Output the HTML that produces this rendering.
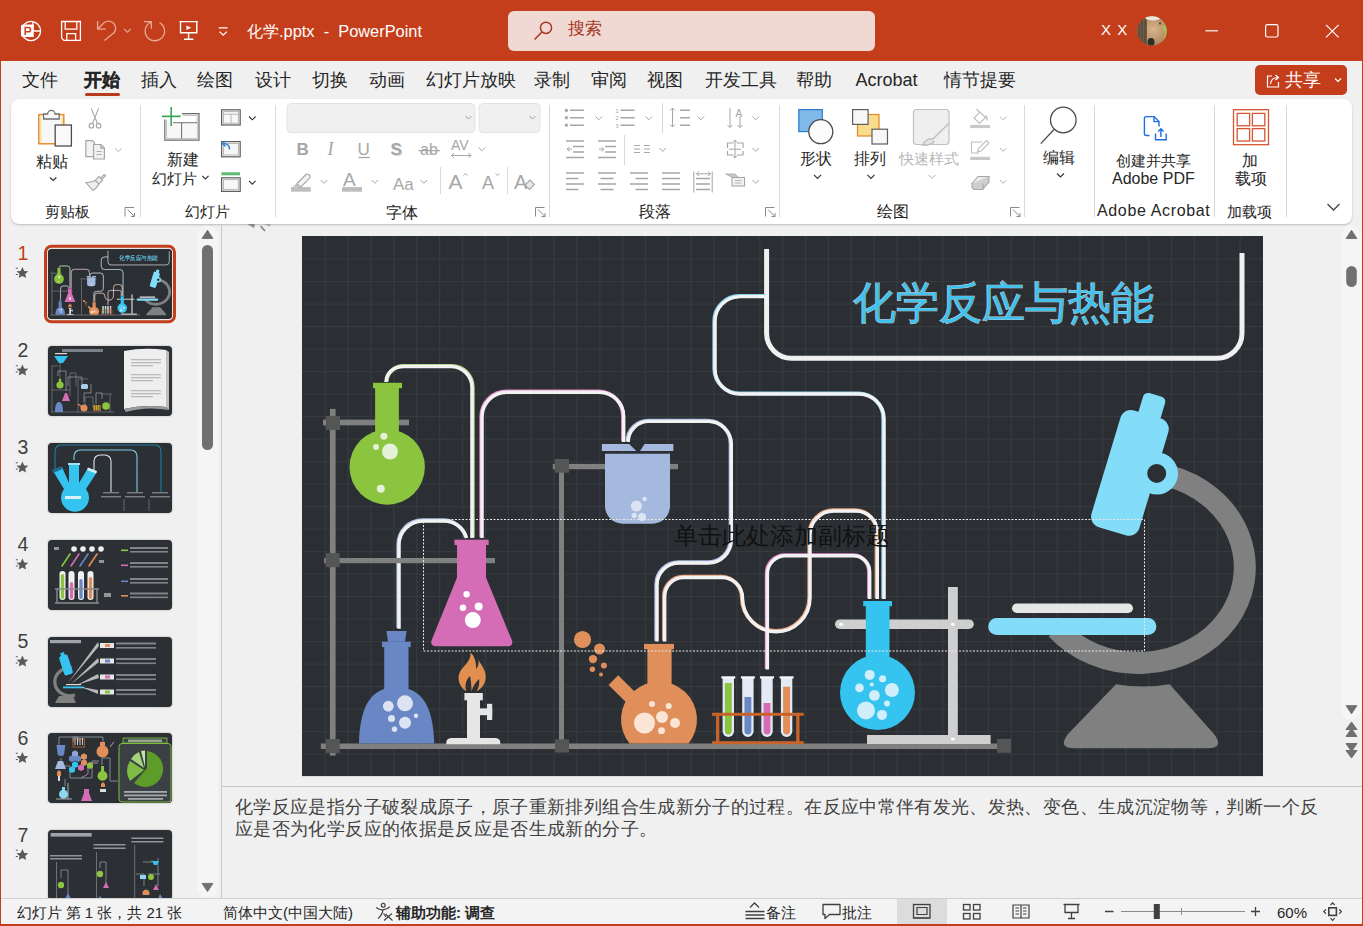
<!DOCTYPE html>
<html><head><meta charset="utf-8">
<style>
*{box-sizing:border-box;margin:0;padding:0}
html,body{width:1363px;height:926px;overflow:hidden;background:#F0F0F0}
body{font-family:"Liberation Sans",sans-serif;color:#262626;position:relative}
.a{position:absolute}
.t{position:absolute;white-space:nowrap;line-height:1}
svg{position:absolute;overflow:visible}
</style></head><body>
<!-- TITLEBAR -->
<div class="a" style="left:0;top:0;width:1363px;height:61px;background:#C43E1C"></div>
<svg style="left:0;top:0" width="1363" height="61" viewBox="0 0 1363 61">
 <g fill="none" stroke="#fff" stroke-width="1.3">
  <circle cx="31" cy="31" r="9.6"/>
  <path d="M33 31H40.6M33 21.4V31"/>
 </g>
 <path d="M21 25.5L23 24.6H33.7V37H23L21 36Z" fill="#fff"/>
 <path d="M25.2 35V27.6H28.4A2.1 2.1 0 0 1 28.4 31.8H25.2" fill="none" stroke="#C43E1C" stroke-width="1.5"/>
 <g fill="none" stroke="#fff" stroke-width="1.3">
  <path d="M61.6 21.5H80.4V40.3H63.8L61.6 38.1Z"/>
  <path d="M65.2 21.5V29.2H76.8V21.5"/>
  <path d="M66.8 40.3V33.6H75.6V40.3"/>
 </g>
 <g fill="none" stroke="#E9A897" stroke-width="1.3">
  <path d="M97.6 21V29.2H105.8M97.8 29L104 22.8A7.1 7.1 0 0 1 114 32.8L104.4 40.6"/>
  <path d="M124 28.8L127.4 32.2L130.8 28.8" stroke-width="1.1"/>
  <path d="M151.4 22A9.7 9.7 0 1 0 159.6 22.6M144 21.6H151.4V28.8"/>
 </g>
 <g fill="none" stroke="#fff" stroke-width="1.4">
  <path d="M179.5 21.6H197.8M180.5 21.6V32.7H196.8V21.6M188.6 32.7V38.8M184 39.2H193.4"/>
 </g>
 <path d="M186.4 25.5L191.3 27.7L186.4 30Z" fill="#fff"/>
 <g fill="none" stroke="#fff" stroke-width="1.3">
  <path d="M218.8 27.8H227.6M219.6 31.6L223.2 35.2L226.8 31.6"/>
 </g>
 <!-- search box -->
 <rect x="508" y="11" width="367" height="40" rx="6" fill="#F1D9D3"/>
 <g fill="none" stroke="#A5361B" stroke-width="1.5">
  <circle cx="546" cy="27.8" r="5.6"/>
  <path d="M541.9 31.9L534.6 39.4"/>
 </g>
 <!-- window controls -->
 <g fill="none" stroke="#fff" stroke-width="1.2">
  <path d="M1205.5 30.8H1218"/>
  <rect x="1265.6" y="24.6" width="12.4" height="12.4" rx="1.8"/>
  <path d="M1326 24.8L1338.6 37.4M1338.6 24.8L1326 37.4"/>
 </g>
 <!-- avatar -->
 <defs><clipPath id="avc"><circle cx="1152" cy="30.9" r="14.7"/></clipPath>
 <radialGradient id="av" cx="0.55" cy="0.45" r="0.55"><stop offset="0" stop-color="#D8B58C"/><stop offset="0.8" stop-color="#B68E64"/><stop offset="1" stop-color="#9E7B58"/></radialGradient></defs>
 <g clip-path="url(#avc)">
  <rect x="1137" y="16" width="30" height="30" fill="url(#av)"/>
  <rect x="1137" y="16" width="10" height="30" fill="#6E5E48"/>
  <path d="M1139 18V46M1142 17V46M1145 18V46" stroke="#4A3E30" stroke-width="0.9"/>
  <path d="M1162 26Q1168 34 1162 42L1168 44V24Z" fill="#A7C159"/>
  <ellipse cx="1153" cy="17.5" rx="8" ry="3" fill="#EDE6D8"/>
  <ellipse cx="1151" cy="42" rx="3.5" ry="4" fill="#2E2E28"/>
  <circle cx="1160" cy="23.5" r="1" fill="#3A3026"/>
 </g>
</svg>
<div class="t" style="left:247px;top:23px;font-size:16.4px;color:#fff">化学.pptx&nbsp; - &nbsp;PowerPoint</div>
<div class="t" style="left:568px;top:20px;font-size:17px;color:#A5361B">搜索</div>
<div class="t" style="left:1101px;top:22px;font-size:15px;color:#fff;letter-spacing:1px">X X</div>
<!-- TABS -->
<!-- TABS -->
<div class="t" style="left:22.0px;top:71px;font-size:18px;">文件</div>
<div class="t" style="left:84.0px;top:71px;font-size:18px;font-weight:bold;-webkit-text-stroke:0.35px #262626">开始</div>
<div class="t" style="left:140.7px;top:71px;font-size:18px;">插入</div>
<div class="t" style="left:197.4px;top:71px;font-size:18px;">绘图</div>
<div class="t" style="left:254.8px;top:71px;font-size:18px;">设计</div>
<div class="t" style="left:312.0px;top:71px;font-size:18px;">切换</div>
<div class="t" style="left:369.0px;top:71px;font-size:18px;">动画</div>
<div class="t" style="left:426.0px;top:71px;font-size:18px;">幻灯片放映</div>
<div class="t" style="left:534.0px;top:71px;font-size:18px;">录制</div>
<div class="t" style="left:591.0px;top:71px;font-size:18px;">审阅</div>
<div class="t" style="left:647.0px;top:71px;font-size:18px;">视图</div>
<div class="t" style="left:704.7px;top:71px;font-size:18px;">开发工具</div>
<div class="t" style="left:795.5px;top:71px;font-size:18px;">帮助</div>
<div class="t" style="left:855.5px;top:71px;font-size:18px;">Acrobat</div>
<div class="t" style="left:944.0px;top:71px;font-size:18px;">情节提要</div>
<div class="a" style="left:85px;top:93px;width:35px;height:3px;border-radius:2px;background:#B83B1D"></div>
<div class="a" style="left:1255px;top:65px;width:92px;height:30px;border-radius:5px;background:#C43E1C"></div>
<svg style="left:1255px;top:65px" width="92" height="30" viewBox="0 0 92 30">
 <g fill="none" stroke="#fff" stroke-width="1.2">
  <path d="M17 11H12.5V22H23.5V17"/>
  <path d="M15.5 19C16 14.5 19 12.5 23 12.5M20.5 10L23.5 12.5L20.5 15"/>
  <path d="M80 13.5L83 16.5L86 13.5"/>
 </g>
</svg>
<div class="t" style="left:1285px;top:71px;font-size:18px;color:#fff">共享</div>
<!-- RIBBON -->
<div class="a" style="left:11px;top:99px;width:1341px;height:125px;background:#fff;border-radius:8px;box-shadow:0 1px 2px rgba(0,0,0,0.22)"></div>
<svg style="left:0;top:0" width="1363" height="230" viewBox="0 0 1363 230">
 <!-- separators -->
 <g stroke="#D9D9D9" stroke-width="1">
  <path d="M140.5 105V217M275.5 105V217M549.5 105V217M779.5 105V217M1024.5 105V217M1094.5 105V217M1214.5 105V217M1286.5 105V217"/>
  <path d="M440.5 167V194M507.5 167V194M662.5 103V133M624.5 135V165"/>
 </g>
 <!-- launchers -->
 <g fill="none" stroke="#8A8A8A" stroke-width="1">
  <path d="M125 216.5V207.5H134M127.5 209.5L134.5 216.5M131 216.5H134.5V213"/>
  <path d="M535.5 216.5V207.5H544.5M538 209.5L545 216.5M541.5 216.5H545V213"/>
  <path d="M765.5 216.5V207.5H774.5M768 209.5L775 216.5M771.5 216.5H775V213"/>
  <path d="M1010.5 216.5V207.5H1019.5M1013 209.5L1020 216.5M1016.5 216.5H1020V213"/>
 </g>
 <!-- paste -->
 <rect x="38.8" y="114.6" width="25" height="29.2" fill="#F7F7F7" stroke="#E8871E" stroke-width="1.4"/>
 <path d="M40.8 142V116.5M62 116.5V124" stroke="#F9DC8C" stroke-width="1.2"/>
 <path d="M43.6 119V114H47.6A3.7 3.7 0 0 1 55 114H59.2V119Z" fill="#F7F7F7" stroke="#707070" stroke-width="1.3"/>
 <rect x="55.2" y="125" width="16.2" height="21" fill="#FAFAFA" stroke="#4D4D4D" stroke-width="1.3"/>
 <path d="M50 177.5L53.2 180.5L56.4 177.5" fill="none" stroke="#333" stroke-width="1.2"/>
 <!-- cut -->
 <g fill="none" stroke="#A6A6A6" stroke-width="1.1">
  <path d="M91.3 108.4L97.5 123.8M98.6 108.4L92.4 123.8"/>
  <circle cx="91.4" cy="125.7" r="2.3"/><circle cx="98.6" cy="125.7" r="2.3"/>
 </g>
 <!-- copy -->
 <g fill="#F2F2F2" stroke="#A6A6A6" stroke-width="1.2">
  <path d="M85.8 156.6V140.6H92.5L94.5 142.6V156.6Z"/>
  <path d="M93.6 159V144.5H100.8L104.4 148.1V159Z"/>
  <path d="M100.8 144.5V148.1H104.4" fill="none"/>
  <path d="M96.5 151.5H101.5M96.5 154.5H101.5" fill="none" stroke-width="0.9"/>
 </g>
 <path d="M115.2 148.5L118.4 151.7L121.6 148.5" fill="none" stroke="#B0B0B0" stroke-width="1"/>
 <!-- format painter -->
 <g fill="#EDEDED" stroke="#A6A6A6" stroke-width="1.1">
  <path d="M104.2 174.5L105.5 175.8L100.5 180.8L99.2 179.5Z"/>
  <path d="M94.8 180.8L99 176.6L102.6 180.2L98.4 184.4Z"/>
  <path d="M86 182.5C90 182.5 93 181.5 95.5 180.5L99 184C97.5 187 95 189 93 190.5Z"/>
 </g>
 <!-- new slide -->
 <g fill="none" stroke="#6B6B6B" stroke-width="1.2">
  <path d="M182 113.6H199V140.2H164.8V119.5"/>
  <path d="M183 115.4H197.2V138.4H166.6V119.5" stroke="#B5B5B5" stroke-width="0.9"/>
  <path d="M173 122.8H197M181.7 122.8V138.4"/>
 </g>
 <rect x="167" y="123.4" width="14" height="14.4" fill="#F7F7F7"/><rect x="182.4" y="123.4" width="14.2" height="14.4" fill="#F7F7F7"/>
 <path d="M162 116.4H180.6M171.2 107V126" stroke="#3AA757" stroke-width="1.6"/>
 <path d="M202.2 175.8L205.4 179L208.6 175.8" fill="none" stroke="#333" stroke-width="1.1"/>
 <!-- layout / reset / section -->
 <g fill="#F7F7F7" stroke="#5E5E5E" stroke-width="1.2">
  <rect x="221.6" y="109.8" width="18.6" height="15.2"/>
  <rect x="221.6" y="141.6" width="18.6" height="15.2"/>
  <rect x="221.6" y="177.8" width="18.6" height="13.6"/>
 </g>
 <g fill="none" stroke="#B0B0B0" stroke-width="0.9">
  <rect x="223.4" y="111.6" width="15" height="11.6"/><path d="M223.4 114.2H238.4M231 114.2V123.2"/>
  <rect x="223.4" y="143.4" width="15" height="11.6"/>
  <rect x="223.4" y="179.6" width="15" height="10"/>
 </g>
 <path d="M221.4 173.8H240" stroke="#5DB870" stroke-width="3"/>
 <path d="M229.5 149.5C229.5 145.5 227 143.5 223 143.5M225.5 141L222.5 143.5L225.5 146.5" fill="none" stroke="#2B88D8" stroke-width="1.4"/>
 <path d="M249 116.5L252.3 119.8L255.6 116.5M249 180.8L252.3 184.1L255.6 180.8" fill="none" stroke="#333" stroke-width="1.1"/>
 <!-- font boxes -->
 <rect x="287" y="103.5" width="188" height="29" rx="4" fill="#F0F0F0" stroke="#E3E3E3"/>
 <rect x="479" y="103.5" width="61" height="29" rx="4" fill="#F0F0F0" stroke="#E3E3E3"/>
 <path d="M465.5 116L468.5 119L471.5 116M529.5 116L532.5 119L535.5 116" fill="none" stroke="#9A9A9A" stroke-width="1"/>
 <g fill="none" stroke="#A6A6A6" stroke-width="1">
  <path d="M478.5 147.5L481.8 150.8L485.1 147.5"/>
  <path d="M320.6 180L323.9 183.3L327.2 180M371.6 180L374.9 183.3L378.2 180M420.6 180L423.9 183.3L427.2 180"/>
  <path d="M595.5 116.5L598.8 119.8L602.1 116.5M645.5 116.5L648.8 119.8L652.1 116.5M697.5 116.5L700.8 119.8L704.1 116.5M752.5 116.5L755.8 119.8L759.1 116.5"/>
  <path d="M659.5 148L662.8 151.3L666.1 148M752.5 148L755.8 151.3L759.1 148M752.5 180L755.8 183.3L759.1 180"/>
 </g>
 <!-- B I U S -->
 <g fill="#A6A6A6">
  <text x="296.5" y="155.3" font-size="17" font-weight="bold" font-family="Liberation Sans">B</text>
  <text x="327.5" y="155.3" font-size="18" font-style="italic" font-family="Liberation Serif">I</text>
  <text x="357.5" y="155.3" font-size="17" font-family="Liberation Sans">U</text>
  <text x="391.5" y="156" font-size="17" font-weight="bold" font-family="Liberation Sans" fill="#D8D8D8">S</text>
  <text x="390.5" y="155.3" font-size="17" font-weight="bold" font-family="Liberation Sans">S</text>
 </g>
 <path d="M358.5 157.5H370" stroke="#A6A6A6" stroke-width="1.3"/>
 <text x="420" y="155" font-size="16" fill="#A6A6A6" font-family="Liberation Sans">ab</text>
 <path d="M418.5 150.6H440" stroke="#A6A6A6" stroke-width="1.2"/>
 <text x="451" y="150" font-size="14" fill="#A6A6A6" font-family="Liberation Sans">AV</text>
 <path d="M451.5 155.5H471M454 153L451.5 155.5L454 158M468.5 153L471 155.5L468.5 158" fill="none" stroke="#A6A6A6" stroke-width="1"/>
 <!-- row3 font -->
 <path d="M291 189.4H310.8" stroke="#BDBDBD" stroke-width="4.6"/>
 <path d="M297 183.5L306 174.5A1.8 1.8 0 0 1 308.6 174.5L309.6 175.5A1.8 1.8 0 0 1 309.6 178.1L300.6 187.1Z" fill="#F4F4F4" stroke="#A6A6A6" stroke-width="1.1"/>
 <path d="M297 183.5L292.5 186.5L300.6 187.1Z" fill="#BDBDBD"/>
 <path d="M342 189.4H362" stroke="#BDBDBD" stroke-width="4.6"/>
 <text x="343" y="185.5" font-size="19" fill="#A6A6A6" font-family="Liberation Sans">A</text>
 <text x="393" y="189.5" font-size="17" fill="#A6A6A6" font-family="Liberation Sans">Aa</text>
 <text x="448.5" y="189" font-size="21" fill="#A6A6A6" font-family="Liberation Sans">A</text>
 <path d="M463.5 175.5L465.5 173.5L467.5 175.5" fill="none" stroke="#A6A6A6" stroke-width="1"/>
 <text x="482" y="189" font-size="18" fill="#A6A6A6" font-family="Liberation Sans">A</text>
 <path d="M495.5 173.5L497.5 175.5L499.5 173.5" fill="none" stroke="#A6A6A6" stroke-width="1"/>
 <text x="514" y="189" font-size="20" fill="#A6A6A6" font-family="Liberation Sans">A</text>
 <path d="M525 185L530 180L534.5 184.5L529.5 189.5Z" fill="#E8E8E8" stroke="#A6A6A6" stroke-width="1.1"/>
 <!-- paragraph -->
 <g stroke="#A6A6A6" stroke-width="1.6" fill="none">
  <path d="M570 110.2H584M570 117.7H584M570 125.2H584"/>
  <path d="M620.5 110.2H634.5M620.5 117.7H634.5M620.5 125.2H634.5"/>
  <path d="M680 110.2H690M680 117.7H690M680 125.2H690"/>
  <path d="M566 141H584M573 146.5H584M573 152H584M566 157.5H584"/>
  <path d="M598 141H616M605 146.5H616M605 152H616M598 157.5H616"/>
  <path d="M634 145.5H640M634 149H640M634 152.5H640M644 145.5H650M644 149H650M644 152.5H650" stroke-width="1.1"/>
  <path d="M566 173H584M566 178.5H578.5M566 184H584M566 189.5H578.5"/>
  <path d="M598 173H616M600.5 178.5H613.5M598 184H616M600.5 189.5H613.5"/>
  <path d="M630 173H648M635.5 178.5H648M630 184H648M635.5 189.5H648"/>
  <path d="M662 173H680M662 178.5H680M662 184H680M662 189.5H680"/>
  <path d="M696 178.5H710M696 184H710M696 189.5H710" stroke-width="1.4"/>
  <path d="M693.8 171.5V192.5M712.2 171.5V192.5" stroke-width="1"/>
 </g>
 <g fill="#A6A6A6">
  <rect x="565" y="109" width="2.8" height="2.8"/><rect x="565" y="116.3" width="2.8" height="2.8"/><rect x="565" y="123.8" width="2.8" height="2.8"/>
 </g>
 <g fill="#A6A6A6" font-family="Liberation Sans" font-size="5.5">
  <text x="615.5" y="112.5">1</text><text x="615.5" y="120">2</text><text x="615.5" y="127.5">3</text>
 </g>
 <g fill="none" stroke="#A6A6A6" stroke-width="1">
  <path d="M672.5 108V127M670 110.5L672.5 108L675 110.5M670 124.5L672.5 127L675 124.5"/>
  <path d="M567 149.2H572M569.5 147L567 149.2L569.5 151.4"/>
  <path d="M599 149.2H604M601.5 147L604 149.2L601.5 151.4"/>
  <path d="M730 108V127.5M727.5 125L730 127.5L732.5 125M740 116V127.5M737.5 125L740 127.5L742.5 125"/>
  <path d="M696.5 173.8H710.5M699 171.5L696.5 173.8L699 176M708 171.5L710.5 173.8L708 176"/>
 </g>
 <text x="735.5" y="117" font-size="10" fill="#A6A6A6" font-family="Liberation Sans">A</text>
 <g fill="#EDEDED" stroke="#A6A6A6" stroke-width="1.2">
  <path d="M727.5 148V143H733M737 143H743V148M727.5 151V155H733M737 155H743V151" fill="none"/>
 </g>
 <path d="M729 149.2H741M735 140V158M733 142.5L735 140L737 142.5M733 155.5L735 158L737 155.5" fill="none" stroke="#A6A6A6" stroke-width="1"/>
 <path d="M725.5 174H735L739 178H734Z" fill="#C8C8C8" stroke="#A6A6A6" stroke-width="0.8"/>
 <rect x="732" y="177.5" width="12.5" height="8.5" fill="#F2F2F2" stroke="#A6A6A6" stroke-width="1.1"/>
 <path d="M735 180.5H741.5M735 183H741.5" stroke="#A6A6A6" stroke-width="0.8"/>
 <!-- shapes -->
 <rect x="798.8" y="109.6" width="23.5" height="22" fill="#7EB9E9" stroke="#2A7CCC" stroke-width="1.2"/>
 <circle cx="820.8" cy="131.7" r="12" fill="#FBFBFB" stroke="#4A4A4A" stroke-width="1.3"/>
 <path d="M814 174.8L817.5 178.3L821 174.8" fill="none" stroke="#333" stroke-width="1.2"/>
 <!-- arrange -->
 <rect x="857.5" y="114.5" width="21.5" height="21.5" fill="#F9DC8C" stroke="#E8871E" stroke-width="1.2"/>
 <rect x="852.6" y="109.6" width="15.5" height="14.8" fill="#F7F7F7" stroke="#5E5E5E" stroke-width="1.2"/>
 <rect x="872" y="129.2" width="15.5" height="14.8" fill="#F7F7F7" stroke="#5E5E5E" stroke-width="1.2"/>
 <path d="M867.5 174.8L871 178.3L874.5 174.8" fill="none" stroke="#333" stroke-width="1.2"/>
 <!-- quick styles -->
 <rect x="913.5" y="109.5" width="35.5" height="35" rx="3" fill="#EFEFEF" stroke="#C0C0C0" stroke-width="1.2"/>
 <path d="M949.5 123C945 127 938 134 933 139M933 139C929 138 925 141 922.5 145C927 145.5 932 144 934.5 141" fill="#E5E5E5" stroke="#C0C0C0" stroke-width="1.6"/>
 <path d="M928.5 174.8L932 178.3L935.5 174.8" fill="none" stroke="#C8C8C8" stroke-width="1.1"/>
 <!-- fill / outline / effects -->
 <path d="M970.2 126.5H990" stroke="#C8C8C8" stroke-width="3.2"/>
 <path d="M974 118L980 112L985.5 117.5L979.5 123.5Z" fill="none" stroke="#BDBDBD" stroke-width="1.2"/>
 <path d="M976.5 109L979.5 112M985.5 115.5C987 117 987.5 119 986.5 120.5" fill="none" stroke="#BDBDBD" stroke-width="1.2"/>
 <path d="M970.2 158.4H990" stroke="#C8C8C8" stroke-width="3.2"/>
 <path d="M982 142H971.5V153H979" fill="none" stroke="#BDBDBD" stroke-width="1.1"/>
 <path d="M977.5 152L978.5 148.5L986.5 140.5L989 143L981 151Z" fill="none" stroke="#BDBDBD" stroke-width="1.1"/>
 <path d="M972 183.5L978 176.5H989L983 183.5Z" fill="#EAEAEA" stroke="#A6A6A6" stroke-width="1.1"/>
 <path d="M972 183.5V187.5L974 189.5H982.5L989 182V176.5M983 183.5V189.5" fill="#CFCFCF" stroke="#A6A6A6" stroke-width="1.1"/>
 <path d="M1000 116.5L1003.3 119.8L1006.6 116.5M1000 148L1003.3 151.3L1006.6 148M1000 180L1003.3 183.3L1006.6 180" fill="none" stroke="#B5B5B5" stroke-width="1"/>
 <!-- editor -->
 <circle cx="1063.3" cy="120" r="12.8" fill="none" stroke="#4A4A4A" stroke-width="1.3"/>
 <path d="M1054 129.5L1040.8 143.6" stroke="#4A4A4A" stroke-width="1.3"/>
 <path d="M1057 173.5L1060.5 177L1064 173.5" fill="none" stroke="#333" stroke-width="1.2"/>
 <!-- pdf -->
 <g fill="none" stroke="#1B6FE0" stroke-width="1.4">
  <path d="M1149.5 135.5H1146.2A1.8 1.8 0 0 1 1144.4 133.7V118.4A1.8 1.8 0 0 1 1146.2 116.6H1154L1159 121.6V126.5"/>
  <path d="M1154 116.6V121.6H1159"/>
  <path d="M1155.5 133.5V139.8H1166.2V133.5M1160.9 129V137M1158.2 131.5L1160.9 128.8L1163.6 131.5"/>
 </g>
 <!-- addins -->
 <g fill="none" stroke="#D65532" stroke-width="1.3">
  <rect x="1233.5" y="109.7" width="35" height="35"/>
  <rect x="1237.2" y="113.4" width="12.4" height="12.4"/><rect x="1252.4" y="113.4" width="12.4" height="12.4"/>
  <rect x="1237.2" y="128.6" width="12.4" height="12.4"/><rect x="1252.4" y="128.6" width="12.4" height="12.4"/>
 </g>
 <path d="M1327.5 204L1333.5 210L1339.5 204" fill="none" stroke="#444" stroke-width="1.3"/>
</svg>
<div class="t" style="left:36px;top:154px;font-size:16px;color:#262626">粘贴</div>
<div class="t" style="left:45px;top:204px;font-size:15px;color:#262626">剪贴板</div>
<div class="t" style="left:166.5px;top:152px;font-size:16px;color:#262626">新建</div>
<div class="t" style="left:151.5px;top:171px;font-size:15px;color:#262626">幻灯片</div>
<div class="t" style="left:185px;top:204px;font-size:15px;color:#262626">幻灯片</div>
<div class="t" style="left:386px;top:204.5px;font-size:16px;color:#262626">字体</div>
<div class="t" style="left:638.5px;top:204px;font-size:16px;color:#262626">段落</div>
<div class="t" style="left:800px;top:151px;font-size:16px;color:#262626">形状</div>
<div class="t" style="left:854px;top:151px;font-size:16px;color:#262626">排列</div>
<div class="t" style="left:899px;top:151px;font-size:15px;color:#B8B8B8">快速样式</div>
<div class="t" style="left:876.5px;top:204px;font-size:16px;color:#262626">绘图</div>
<div class="t" style="left:1043px;top:150px;font-size:16px;color:#262626">编辑</div>
<div class="t" style="left:1116px;top:153px;font-size:15px;color:#262626">创建并共享</div>
<div class="t" style="left:1242px;top:153px;font-size:16px;color:#262626">加</div>
<div class="t" style="left:1235px;top:170.5px;font-size:16px;color:#262626">载项</div>
<div class="t" style="left:1227px;top:204px;font-size:15px;color:#262626">加载项</div>
<div class="t" style="left:1112px;top:170.5px;font-size:16px">Adobe PDF</div>
<div class="t" style="left:1097px;top:203px;font-size:16px;letter-spacing:0.65px">Adobe Acrobat</div>
<!-- LEFT PANEL -->
<div class="a" style="left:221px;top:224px;width:1px;height:674px;background:#C9C9C9"></div>
<div class="a" style="left:197px;top:226px;width:21px;height:672px;border-radius:10px;background:#F5F5F5"></div>
<svg style="left:0;top:0" width="1363" height="926" viewBox="0 0 1363 926">
 <path d="M207.5 230.3L212.9 238.4H202.1Z" fill="#707070" stroke="#707070" stroke-width="1" stroke-linejoin="round"/>
 <rect x="202" y="245" width="11" height="205" rx="5.5" fill="#707070"/>
 <path d="M207.5 891.5L212.9 883.4H202.1Z" fill="#707070" stroke="#707070" stroke-width="1" stroke-linejoin="round"/>
 <!-- right scrollbar -->
 <rect x="1341" y="226" width="20" height="494" rx="10" fill="#F5F5F5"/>
 <path d="M1351.5 230.3L1356.8 238.4H1346.2Z" fill="#707070" stroke="#707070" stroke-width="1" stroke-linejoin="round"/>
 <rect x="1346.2" y="266" width="10.6" height="21" rx="5.3" fill="#707070"/>
 <path d="M1351.5 713.8L1356.8 705.7H1346.2Z" fill="#707070" stroke="#707070" stroke-width="1" stroke-linejoin="round"/>
 <path d="M1351.5 722L1357 729.5H1346Z M1351.5 728.5L1357 736.5H1346Z" fill="#707070" stroke="#707070" stroke-width="1" stroke-linejoin="round"/>
 <path d="M1351.5 758L1357 750.5H1346Z M1351.5 751.5L1357 743.5H1346Z" fill="#707070" stroke="#707070" stroke-width="1" stroke-linejoin="round"/>
 <!-- slide1 selection -->
 <rect x="45.5" y="246.2" width="129" height="75.6" rx="6" fill="none" stroke="#C43E1C" stroke-width="3"/>
 <rect x="47.5" y="248.2" width="125" height="71.6" rx="4" fill="#fff"/>
</svg>
<div class="t" style="left:17.5px;top:243.5px;font-size:19.5px;color:#C43E1C">1</div>
<div class="t" style="left:17.5px;top:341.0px;font-size:19.5px;color:#404040">2</div>
<div class="t" style="left:17.5px;top:438.0px;font-size:19.5px;color:#404040">3</div>
<div class="t" style="left:17.5px;top:535.0px;font-size:19.5px;color:#404040">4</div>
<div class="t" style="left:17.5px;top:632.0px;font-size:19.5px;color:#404040">5</div>
<div class="t" style="left:17.5px;top:728.5px;font-size:19.5px;color:#404040">6</div>
<div class="t" style="left:17.5px;top:825.5px;font-size:19.5px;color:#404040">7</div>
<svg style="left:0;top:0" width="60" height="926" viewBox="0 0 60 926"><defs><g id="star"><path d="M22.4 266.9L24.2 270.9L28.3 271.3L25.2 274.1L26.1 278.1L22.4 276L18.7 278.1L19.6 274.1L16.5 271.3L20.6 270.9Z" fill="#595959"/><path d="M15.8 268.3H17.8M15.8 274.5H17.8" stroke="#595959" stroke-width="1.1"/></g></defs><use href="#star" y="0"/><use href="#star" y="97.5"/><use href="#star" y="194.5"/><use href="#star" y="291.5"/><use href="#star" y="388.5"/><use href="#star" y="485"/><use href="#star" y="582"/></svg>
<svg width="0" height="0" style="position:absolute"><defs>
<clipPath id="tc"><rect x="0" y="0" width="124" height="70" rx="4"/></clipPath>
<g id="tbg"><rect width="124" height="70" fill="#2B2F33"/><path d="M3.00 0V70M5.96 0V70M8.92 0V70M11.88 0V70M14.84 0V70M17.80 0V70M20.76 0V70M23.72 0V70M26.68 0V70M29.64 0V70M32.60 0V70M35.56 0V70M38.52 0V70M41.48 0V70M44.44 0V70M47.40 0V70M50.36 0V70M53.32 0V70M56.28 0V70M59.24 0V70M62.20 0V70M65.16 0V70M68.12 0V70M71.08 0V70M74.04 0V70M77.00 0V70M79.96 0V70M82.92 0V70M85.88 0V70M88.84 0V70M91.80 0V70M94.76 0V70M97.72 0V70M100.68 0V70M103.64 0V70M106.60 0V70M109.56 0V70M112.52 0V70M115.48 0V70M118.44 0V70M121.40 0V70M0 3.00H124M0 5.92H124M0 8.84H124M0 11.76H124M0 14.68H124M0 17.60H124M0 20.52H124M0 23.44H124M0 26.36H124M0 29.28H124M0 32.20H124M0 35.12H124M0 38.04H124M0 40.96H124M0 43.88H124M0 46.80H124M0 49.72H124M0 52.64H124M0 55.56H124M0 58.48H124M0 61.40H124M0 64.32H124M0 67.24H124" stroke="#32383C" stroke-width="0.4"/></g>
</defs></svg>
<svg style="left:48px;top:248.5px;filter:drop-shadow(0 0.5px 1px rgba(0,0,0,0.25))" width="124" height="70" viewBox="0 0 124 70"><g clip-path="url(#tc)"><use href="#tbg"/><use href="#s1" x="0" y="0" width="124" height="70"/></g></svg>
<svg style="left:48px;top:346px;filter:drop-shadow(0 0.5px 1px rgba(0,0,0,0.25))" width="124" height="70" viewBox="0 0 124 70"><g clip-path="url(#tc)"><use href="#tbg"/>
<g fill="none" stroke="#8A8A8A" stroke-width="0.6"><path d="M3 66H66M4 20V66M4 20H10M4 44H22M30 66V33H40M12 40V14H17M22 50V27H28V40M37 62V51H45V62M53 48H64M62 48V66"/></g>
<g fill="none" stroke="#9DA3AA" stroke-width="0.7"><path d="M10 30V25H18V45M20 40V31H34V38M36 56V47H43V38M48 58V47H54V53"/></g>
<path d="M6 10L11 17H15L20 10Z" fill="#35C3F0"/><rect x="7" y="7" width="12" height="1.2" fill="#ddd"/>
<circle cx="12" cy="39" r="3.6" fill="#8BC43F"/><rect x="10.8" y="33" width="2.4" height="4" fill="#8BC43F"/>
<path d="M17 47L14 55H22L19 47Z" fill="#D46DB5"/>
<path d="M10 56C7 58 7 63 7 66H15C15 63 15 58 12 56Z" fill="#6A87C5"/>
<rect x="33" y="38" width="7" height="5" rx="1.5" fill="#A5CFE8"/>
<circle cx="36" cy="62" r="3.5" fill="#E08F5A"/><path d="M30 58L34 61" stroke="#E08F5A" stroke-width="1.2"/>
<rect x="45" y="59" width="8" height="6" fill="#C8642A" opacity="0.8"/><path d="M46.5 59V64M48.5 59V64M50.5 59V64" stroke="#8BC43F" stroke-width="0.9"/>
<circle cx="58" cy="60" r="3.8" fill="#8BC43F"/>
<rect x="14" y="3" width="41" height="3" fill="#B9C4CC" opacity="0.55"/>
<path d="M76 5Q96 1 118 4V61Q96 58 76 63Z" fill="#EEEEEE"/>
<path d="M118 4L121 6V64L118 61Z" fill="#BEBEBE"/>
<path d="M76 63Q96 58 118 61L121 64Q98 60 78 66Z" fill="#9A9A9A"/>
<g fill="#B5B5B5" opacity="0.9"><rect x="83" y="13" width="30" height="1.3"/><rect x="83" y="16" width="30" height="1.3"/><rect x="83" y="19" width="22" height="1.3"/>
<rect x="83" y="28" width="30" height="1.3"/><rect x="83" y="31" width="30" height="1.3"/><rect x="83" y="34" width="22" height="1.3"/>
<rect x="83" y="44" width="30" height="1.3"/><rect x="83" y="47" width="30" height="1.3"/><rect x="83" y="50" width="22" height="1.3"/></g>
</g></svg>
<svg style="left:48px;top:443px;filter:drop-shadow(0 0.5px 1px rgba(0,0,0,0.25))" width="124" height="70" viewBox="0 0 124 70"><g clip-path="url(#tc)"><use href="#tbg"/>
<g fill="none" stroke-width="1.1">
<path d="M7 27V8A6 6 0 0 1 13 2H107A6 6 0 0 1 113 8V49" stroke="#1E7FA0"/>
<path d="M26 17V13A6 6 0 0 1 32 7H83A6 6 0 0 1 89 13V49" stroke="#7DCDE8"/>
<path d="M46 29V18A6 6 0 0 1 52 12H57A6 6 0 0 1 63 18V49" stroke="#DDE6EA"/>
</g>
<path d="M5 28L14 24L21 40V21H31V40L40 25L49 29L38 46A14 14 0 1 1 16 46Z" fill="#35C3F0"/>
<path d="M4 27L13 23.5L14.5 26L5.5 30Z" fill="#1E6F8E"/><rect x="20" y="20" width="12" height="2" fill="#A5DFF2"/><path d="M40 24.5L49 28L48 30.5L39 27Z" fill="#D6EEF6"/>
<rect x="17" y="53" width="16" height="3" fill="#fff" opacity="0.8"/>
<g fill="#C8CDD0" opacity="0.5"><rect x="55" y="49" width="16" height="1.4"/><rect x="53" y="53" width="20" height="1.4"/><rect x="79" y="49" width="16" height="1.4"/><rect x="77" y="53" width="20" height="1.4"/><rect x="104" y="49" width="16" height="1.4"/><rect x="102" y="53" width="20" height="1.4"/></g>
<path d="M76 56V68M101 56V68" stroke="#9AA0A5" stroke-width="0.5"/>
</g></svg>
<svg style="left:48px;top:540px;filter:drop-shadow(0 0.5px 1px rgba(0,0,0,0.25))" width="124" height="70" viewBox="0 0 124 70"><g clip-path="url(#tc)"><use href="#tbg"/>
<g fill="#F0F0F0"><rect x="11.5" y="31" width="6" height="29" rx="3"/><rect x="20.5" y="31" width="6" height="29" rx="3"/><rect x="30" y="31" width="6" height="29" rx="3"/><rect x="39.5" y="31" width="6" height="29" rx="3"/></g>
<rect x="12.8" y="34" width="3.4" height="25" rx="1.7" fill="#8BC43F"/><rect x="21.8" y="42" width="3.4" height="17" rx="1.7" fill="#D46DB5"/><rect x="31.3" y="39" width="3.4" height="20" rx="1.7" fill="#6A87C5"/><rect x="40.8" y="37" width="3.4" height="22" rx="1.7" fill="#E08F5A"/>
<path d="M7 49H51M7 63H51M9 49V63M49 49V63" stroke="#8A8A8A" stroke-width="1.4" fill="none"/>
<g stroke-width="1.6" stroke-linecap="round"><path d="M14 26L22 14" stroke="#8BC43F"/><path d="M23 26L31 14" stroke="#D46DB5"/><path d="M32 26L40 14" stroke="#6A87C5"/><path d="M41 26L49 14" stroke="#E08F5A"/></g>
<g fill="#F0F0F0"><circle cx="26" cy="9" r="2.8"/><circle cx="35" cy="9" r="2.8"/><circle cx="44" cy="9" r="2.8"/><circle cx="53" cy="9" r="2.8"/></g>
<g fill="#D8D8D8" opacity="0.6"><rect x="6" y="7" width="5" height="3"/><rect x="51" y="20" width="5" height="3"/><rect x="56" y="53" width="7" height="4"/></g>
<rect x="73" y="9.5" width="7" height="1.6" fill="#8BC43F"/><rect x="73" y="24.5" width="7" height="1.6" fill="#D46DB5"/><rect x="73" y="40.5" width="7" height="1.6" fill="#6A87C5"/><rect x="73" y="55" width="7" height="1.6" fill="#E08F5A"/>
<g fill="#D4D8DB" opacity="0.5"><rect x="82" y="7" width="38" height="2"/><rect x="82" y="11" width="38" height="1.6"/><rect x="82" y="22" width="38" height="2"/><rect x="82" y="26" width="38" height="1.6"/><rect x="82" y="38" width="38" height="2"/><rect x="82" y="42" width="38" height="1.6"/><rect x="82" y="52.5" width="38" height="2"/><rect x="82" y="56.5" width="38" height="1.6"/></g>
</g></svg>
<svg style="left:48px;top:636.5px;filter:drop-shadow(0 0.5px 1px rgba(0,0,0,0.25))" width="124" height="70" viewBox="0 0 124 70"><g clip-path="url(#tc)"><use href="#tbg"/>
<rect x="2" y="3" width="31" height="3.2" fill="#D0D5D8" opacity="0.7"/>
<path d="M24 31A15 14 0 1 0 27 58" fill="none" stroke="#808080" stroke-width="3.2"/>
<path d="M11 59H25L28 66H7Z" fill="#808080"/>
<g transform="translate(18 28) rotate(-18)"><rect x="-4.5" y="-10" width="9" height="20" rx="2" fill="#35C3F0"/><rect x="-2" y="-13" width="4" height="4" fill="#35C3F0"/></g>
<rect x="15" y="49.5" width="21" height="1.8" fill="#35C3F0"/><rect x="18" y="47" width="15" height="1.2" fill="#ddd"/>
<g fill="#D0D0D0" opacity="0.85"><path d="M20 46L50 5L51 9Z"/><path d="M23 47L50 21L51 25Z"/><path d="M29 48L50 37L51 41Z"/><path d="M33 50L50 53L50 57Z"/></g>
<g fill="#E6E6E6"><rect x="52" y="6" width="14" height="5"/><rect x="52" y="21.5" width="14" height="5"/><rect x="52" y="37.5" width="14" height="5"/><rect x="52" y="52.5" width="14" height="5"/></g>
<rect x="57" y="7" width="5" height="3" fill="#E08F5A"/><rect x="57" y="22.5" width="5" height="3" fill="#6A87C5"/><rect x="57" y="38.5" width="5" height="3" fill="#D46DB5"/><rect x="57" y="53.5" width="5" height="3" fill="#8BC43F"/>
<g fill="#D4D8DB" opacity="0.5"><rect x="68" y="5.5" width="40" height="2"/><rect x="68" y="10" width="40" height="1.6"/><rect x="68" y="21" width="40" height="2"/><rect x="68" y="25.5" width="40" height="1.6"/><rect x="68" y="37" width="40" height="2"/><rect x="68" y="41.5" width="40" height="1.6"/><rect x="68" y="52" width="40" height="2"/><rect x="68" y="56.5" width="40" height="1.6"/></g>
</g></svg>
<svg style="left:48px;top:733px;filter:drop-shadow(0 0.5px 1px rgba(0,0,0,0.25))" width="124" height="70" viewBox="0 0 124 70"><g clip-path="url(#tc)"><use href="#tbg"/>
<g fill="none" stroke="#8A95A0" stroke-width="0.9"><path d="M11 13V4H30V9M13 25V33H22V45H44V28H51M25 9V4H55V10M54 32V25H62V48H70M17 53V46"/></g>
<path d="M33 45L40 41V30H50" fill="none" stroke="#C27FB5" stroke-width="0.9"/>
<path d="M8.5 12H17.3L16 22Q12.9 24 9.8 22Z" fill="#6A87C5"/>
<rect x="25" y="6" width="11.5" height="8" fill="none" stroke="#C8642A" stroke-width="0.8"/><path d="M27 5V12M29.5 5V12M32 5V12M34.5 5V12" stroke="#eee" stroke-width="0.8"/>
<path d="M52 9H57V13A6 6 0 1 1 52 13Z" fill="#E08F5A"/><path d="M62 14L66 9" stroke="#ddd" stroke-width="0.7"/>
<g fill="#6A87C5"><path d="M21 24l3-1.7 3 1.7v3.4l-3 1.7-3-1.7z"/><path d="M27 24l3-1.7 3 1.7v3.4l-3 1.7-3-1.7z"/><path d="M24 19l3-1.7 3 1.7v3.4l-3 1.7-3-1.7z" fill="#8CA5DA"/></g>
<path d="M33 28l3-1.7 3 1.7v3.4l-3 1.7-3-1.7z" fill="#E08F5A"/><path d="M39 31l3-1.7 3 1.7v3.4l-3 1.7-3-1.7z" fill="#8BC43F"/><path d="M33 22l3-1.7 3 1.7v3.4l-3 1.7-3-1.7z" fill="#E08F5A"/>
<path d="M24 30l3-1.7 3 1.7v3.4l-3 1.7-3-1.7z" fill="#35C3F0"/><path d="M30 33l3-1.7 3 1.7v3.4l-3 1.7-3-1.7z" fill="#D46DB5"/><path d="M21 35l3-1.7 3 1.7v3.4l-3 1.7-3-1.7z" fill="#35C3F0"/>
<path d="M10 28H15L18 36H7Z" fill="#A5B8DD"/>
<path d="M9 39L11 37L13 39V43H9Z" fill="#E08F50"/><rect x="10" y="43" width="2" height="5" fill="#ddd"/>
<path d="M14 54H17V57A4.5 4.5 0 1 1 14 57Z" fill="#8CD8F2"/><path d="M8 66H24M20 50V66" stroke="#ccc" stroke-width="0.8"/>
<path d="M36 56H41V60L44 68H33L36 60Z" fill="#D46DB5"/>
<path d="M53 33H56V38A5 5 0 1 1 53 38Z" fill="#8BC43F"/>
<path d="M53 51L55 49L57 51V54H53Z" fill="#E08F50"/><rect x="52" y="56" width="6" height="3" fill="#ddd"/>
<path d="M75 5H119V10H75Z" fill="#3B4044" stroke="#7DBB42" stroke-width="0.9"/>
<rect x="71" y="10.5" width="52" height="58.5" rx="3" fill="#3B4044" stroke="#7DBB42" stroke-width="1"/>
<rect x="80" y="6.5" width="34" height="2.5" fill="#D4E8C2" opacity="0.6"/>
<path d="M99 35L99 18A18 18 0 1 1 86 50Z" fill="#5E9C2A"/>
<path d="M96 37L82 48A18 18 0 0 1 82 28Z" fill="#7DBB42"/>
<path d="M96 35L83 26A18 18 0 0 1 91 19Z" fill="#A6D27A"/>
<path d="M97 34L93 18A18 18 0 0 1 97 17.5Z" fill="#C6E3A7"/>
<g fill="#D4D8DB" opacity="0.7"><rect x="76" y="58" width="43" height="1.8"/><rect x="76" y="61.5" width="43" height="1.8"/><rect x="80" y="65" width="35" height="1.8"/></g>
</g></svg>
<div class="a" style="left:40px;top:826px;width:140px;height:71.5px;overflow:hidden"><svg style="left:8px;top:4px;filter:drop-shadow(0 0.5px 1px rgba(0,0,0,0.25))" width="124" height="70" viewBox="0 0 124 70"><g clip-path="url(#tc)"><use href="#tbg"/>
<rect x="2.7" y="3" width="41" height="3.6" fill="#D0D5D8" opacity="0.7"/>
<g fill="#D4D8DB" opacity="0.6"><rect x="2" y="25" width="32" height="1.5"/><rect x="2" y="28" width="32" height="1.5"/><rect x="45.5" y="14" width="32" height="1.5"/><rect x="45.5" y="17.5" width="32" height="1.5"/><rect x="83.4" y="7.5" width="32" height="1.5"/><rect x="83.4" y="11" width="32" height="1.5"/></g>
<path d="M8.5 32V70M48.5 22V70M86.7 15V70" stroke="#9AA0A5" stroke-width="0.6"/>
<g fill="none" stroke="#8A95A0" stroke-width="0.8"><path d="M13 48V40H20V66M52 38V32H58V56M88 44H96V56M95 32H104V30M110 28V56M100 44H112"/></g>
<circle cx="13" cy="55" r="3.2" fill="#8BC43F"/><path d="M20 63L17 69H23Z" fill="#6A87C5"/>
<circle cx="52" cy="44" r="3.2" fill="#8BC43F"/><path d="M58 52L55 58H61Z" fill="#D46DB5"/><path d="M52 66L49 70H55Z" fill="#6A87C5"/>
<rect x="92" y="45" width="6" height="4" fill="#8CD8F2"/><circle cx="103" cy="47" r="3" fill="#8BC43F"/><path d="M104 31H111L109 35H106Z" fill="#35C3F0"/>
<path d="M95 65A3.5 3.5 0 1 1 101 65Z" fill="#E08F5A"/><path d="M108 54L105 60H111Z" fill="#D46DB5"/><path d="M112 64L110 69H115Z" fill="#6A87C5"/>
</g></svg>
</div>
<svg style="left:0;top:0" width="300" height="240"><defs><filter id="bl" x="-50%" y="-50%" width="200%" height="200%"><feGaussianBlur stdDeviation="0.7"/></filter></defs>
<g filter="url(#bl)" fill="#8A8A8A"><path d="M247 224H255L254 228Z"/><path d="M260.5 226L265 231" stroke="#808080" stroke-width="1.6"/><path d="M264 224H271L269.5 226.5Z" opacity="0.6"/></g></svg>
<!-- SLIDE -->
<svg width="0" height="0" style="position:absolute">
<defs>
<symbol id="s1" viewBox="302 236 961 540">
 <rect x="302" y="236" width="961" height="540" fill="#2B2F33"/>
 <path d="M325.30 236V776M348.17 236V776M371.04 236V776M393.91 236V776M416.78 236V776M439.65 236V776M462.52 236V776M485.39 236V776M508.26 236V776M531.13 236V776M554.00 236V776M576.87 236V776M599.74 236V776M622.61 236V776M645.48 236V776M668.35 236V776M691.22 236V776M714.09 236V776M736.96 236V776M759.83 236V776M782.70 236V776M805.57 236V776M828.44 236V776M851.31 236V776M874.18 236V776M897.05 236V776M919.92 236V776M942.79 236V776M965.66 236V776M988.53 236V776M1011.40 236V776M1034.27 236V776M1057.14 236V776M1080.01 236V776M1102.88 236V776M1125.75 236V776M1148.62 236V776M1171.49 236V776M1194.36 236V776M1217.23 236V776M1240.10 236V776M302 259.10H1263M302 281.60H1263M302 304.10H1263M302 326.60H1263M302 349.10H1263M302 371.60H1263M302 394.10H1263M302 416.60H1263M302 439.10H1263M302 461.60H1263M302 484.10H1263M302 506.60H1263M302 529.10H1263M302 551.60H1263M302 574.10H1263M302 596.60H1263M302 619.10H1263M302 641.60H1263M302 664.10H1263M302 686.60H1263M302 709.10H1263M302 731.60H1263M302 754.10H1263" stroke="#343A3E" stroke-width="1.4" fill="none"/>
 <!-- title frame -->
 <path d="M766.6 249V333.3A25 25 0 0 0 791.6 358.3H1217A25 25 0 0 0 1242 333.3V253" fill="none" stroke="#F0F0F0" stroke-width="5"/>
 <text x="853" y="318.3" font-family="Liberation Sans" font-size="44" textLength="301" lengthAdjust="spacingAndGlyphs" fill="#3EC2EF" stroke="#C3D0D5" stroke-width="1" paint-order="stroke fill">化学反应与热能</text>
 <!-- tubes -->
 <g fill="none" stroke-width="3.9">
  <path transform="translate(0.7 -0.6)" stroke="#B9D78F" d="M386 382A17 15.5 0 0 1 403 366.6H451A21 21 0 0 1 472 387.6V538"/>
  <path transform="translate(-0.7 -0.7)" stroke="#E58BCB" d="M482 538V417A24.8 24.8 0 0 1 506.8 392.2H599.4A24.3 24.3 0 0 1 623.7 416.5V442"/>
  <path transform="translate(-0.7 -0.7)" stroke="#A9BCE3" d="M628.2 442A20.6 20.6 0 0 1 648.8 421.4H708.3A23 23 0 0 1 731.3 444.4V540A23 23 0 0 1 708.3 563H679A22 22 0 0 0 657 585V641.5"/>
  <path transform="translate(-0.7 -0.7)" stroke="#A9BCE3" d="M399 628.8V545A24 24 0 0 1 423 521H443A23.6 23.6 0 0 1 466.6 538"/>
  <path transform="translate(-0.7 -0.7)" stroke="#E9A27A" d="M664.7 641.5V596.5A19 19 0 0 1 683.7 577.5H722A20.5 20.5 0 0 1 742.5 598A33.75 33.75 0 0 0 810 598V534.8A23.8 23.8 0 0 1 833.8 511H856A21.3 21.3 0 0 1 877.3 532.3V599"/>
  <path transform="translate(-0.7 -0.6)" stroke="#87D3F0" d="M766.6 296.6H740A25 25 0 0 0 715 321.6V369A25 25 0 0 0 740 394H859A25 25 0 0 1 884 419V599"/>
  <path transform="translate(-0.7 -0.7)" stroke="#E58BCB" d="M767.4 669.6V574A18.2 18.2 0 0 1 785.6 555.8H853.5A16.2 16.2 0 0 1 869.7 572V599"/>
 </g>
 <g fill="none" stroke="#F2F2F2" stroke-width="3.4">
  <path d="M386 382A17 15.5 0 0 1 403 366.6H451A21 21 0 0 1 472 387.6V538"/>
  <path d="M482 538V417A24.8 24.8 0 0 1 506.8 392.2H599.4A24.3 24.3 0 0 1 623.7 416.5V442"/>
  <path d="M628.2 442A20.6 20.6 0 0 1 648.8 421.4H708.3A23 23 0 0 1 731.3 444.4V540A23 23 0 0 1 708.3 563H679A22 22 0 0 0 657 585V641.5"/>
  <path d="M399 628.8V545A24 24 0 0 1 423 521H443A23.6 23.6 0 0 1 466.6 538"/>
  <path d="M664.7 641.5V596.5A19 19 0 0 1 683.7 577.5H722A20.5 20.5 0 0 1 742.5 598A33.75 33.75 0 0 0 810 598V534.8A23.8 23.8 0 0 1 833.8 511H856A21.3 21.3 0 0 1 877.3 532.3V599"/>
  <path d="M766.6 296.6H740A25 25 0 0 0 715 321.6V369A25 25 0 0 0 740 394H859A25 25 0 0 1 884 419V599"/>
  <path d="M767.4 669.6V574A18.2 18.2 0 0 1 785.6 555.8H853.5A16.2 16.2 0 0 1 869.7 572V599"/>
 </g>
 <!-- stands -->
 <g fill="#808080">
  <rect x="329.9" y="408.9" width="5.7" height="346.7"/>
  <rect x="323" y="419.6" width="86" height="5.7"/>
  <rect x="324" y="558" width="171" height="5.2"/>
  <rect x="320.8" y="743.5" width="676.2" height="5.5"/>
  <rect x="559" y="462" width="5" height="283"/>
  <rect x="552.8" y="463.9" width="125.2" height="5.3"/>
 </g>
 <g fill="#555555">
  <rect x="326" y="416" width="14" height="14"/>
  <rect x="325.7" y="553.2" width="14" height="14"/>
  <rect x="325.7" y="739" width="14" height="14"/>
  <rect x="554.8" y="459" width="14.2" height="13.7"/>
  <rect x="555" y="739.3" width="14" height="13.3"/>
  <rect x="997" y="738.8" width="14" height="14"/>
 </g>
 <!-- stand 3 -->
 <g fill="#CFCFCF">
  <rect x="835" y="619.4" width="138.8" height="9.6" rx="4.8"/>
  <rect x="948" y="587" width="9.8" height="150"/>
  <rect x="867" y="735" width="123.6" height="9"/>
 </g>
 <g fill="#fff"><ellipse cx="841.2" cy="624.2" rx="2" ry="1.5"/><ellipse cx="952.9" cy="624.2" rx="2" ry="1.5"/><ellipse cx="952.9" cy="739" rx="2" ry="1.5"/></g>
 <!-- green flask -->
 <g fill="#8BC43F">
  <rect x="373" y="382.8" width="29" height="5.4"/>
  <rect x="375.1" y="388" width="23.8" height="50"/>
  <circle cx="387.2" cy="467" r="37.7"/>
 </g>
 <g fill="#E4F0D8"><circle cx="390" cy="451.5" r="8"/><circle cx="383.9" cy="436.3" r="3.5"/><circle cx="376" cy="446.9" r="3"/><circle cx="380.8" cy="488.8" r="4"/></g>
 <!-- beaker -->
 <g fill="#A5B8DD">
  <path d="M601.9 444H629.2L636.4 451H601.9Z"/>
  <path d="M673.4 444H644.6L640 451H673.4Z"/>
  <path d="M605 453.8H670V506A17.7 17.7 0 0 1 652.3 523.7H622.7A17.7 17.7 0 0 1 605 506Z"/>
 </g>
 <g fill="#DCE4F3"><circle cx="636.4" cy="506" r="5.5"/><circle cx="644.6" cy="499" r="2.2"/><circle cx="634.3" cy="515.4" r="2.7"/><circle cx="642" cy="516.9" r="4"/></g>
 <!-- pink flask -->
 <g fill="#D46DB5">
  <rect x="454.4" y="539.7" width="34.3" height="5.3"/>
  <path d="M457 545H486V577.5L512 640.5Q513.5 646.3 507.5 646.3H436Q430 646.3 431.5 640.5L457 577.5Z"/>
 </g>
 <g fill="#fff"><circle cx="466.6" cy="594.2" r="3.2"/><circle cx="463" cy="607.7" r="3.2"/><circle cx="478.7" cy="606.6" r="4"/><circle cx="472.8" cy="620.1" r="8"/></g>
 <!-- blue flask left -->
 <g fill="#6A87C5">
  <path d="M386.4 631H406.6L405 641.7H388Z"/>
  <rect x="382" y="641.7" width="28.7" height="5.4"/>
  <path d="M384.2 647H408.5V689C425 694 433.5 712 434.2 743.5H359C359.7 712 368 694 384.2 689Z"/>
 </g>
 <g fill="#DCE3F3"><circle cx="388.3" cy="706.2" r="5.4"/><circle cx="405" cy="703.3" r="8"/><circle cx="391.5" cy="718.4" r="3.5"/><circle cx="405" cy="722.7" r="6"/><circle cx="416" cy="715.7" r="2.2"/><circle cx="394.5" cy="729.2" r="2.7"/></g>
 <!-- burner -->
 <g fill="#E6E6E6">
  <rect x="464.4" y="693" width="18.4" height="7.3"/>
  <rect x="467" y="700" width="13" height="39"/>
  <rect x="480" y="708.4" width="12.2" height="6.8"/>
  <rect x="487" y="703.8" width="5.2" height="16.2"/>
  <path d="M446.3 744.3V742.5Q446.3 738 452 738H494.5Q500.3 738 500.3 742.5V744.3Z"/>
 </g>
 <path d="M470.5 652.5C471 660 466 664 461 670C456 677 459 687 466.5 691.4C464 686 466.5 679 470 676C471 682 471.5 687 471.5 691.4C473 686 476 682 479 679C480 684 478 689 476.5 691.4C483 688 487.5 681 485 672C483.5 667 480 663 478.5 660C479 664 478 667 476 669C476.5 662 474.5 656 470.5 652.5Z" fill="#E08F50"/>
 <!-- orange flask -->
 <g fill="#E08F5A">
  <rect x="644" y="643.9" width="30" height="5.3"/>
  <rect x="647.4" y="649" width="24.2" height="40"/>
  <path d="M629.54 743.5A38 38 0 1 1 688.46 743.5Z"/>
  <path d="M608.6 684.9L618.2 675.2L643 700L633.4 709.6Z"/>
  <circle cx="582.5" cy="639.5" r="8.6"/><circle cx="599.5" cy="649" r="5.5"/><circle cx="593" cy="659.1" r="4.2"/><circle cx="603.9" cy="665.4" r="3"/><circle cx="592.4" cy="669.2" r="2.7"/><circle cx="601" cy="674.4" r="2"/>
 </g>
 <g fill="#FBE5D6"><circle cx="644.5" cy="723" r="10.5"/><circle cx="662" cy="717" r="6"/><circle cx="675" cy="723" r="5"/><circle cx="661.5" cy="730.7" r="3.4"/><circle cx="652" cy="704" r="3"/><circle cx="668.7" cy="705.9" r="3"/></g>
 <!-- test tubes -->
 <g fill="#E3E9F5">
  <path d="M722.6 678H734V731.3A5.7 5.7 0 0 1 722.6 731.3Z"/>
  <path d="M742.2 678H753.6V731.3A5.7 5.7 0 0 1 742.2 731.3Z"/>
  <path d="M761.3 678H772.7V731.3A5.7 5.7 0 0 1 761.3 731.3Z"/>
  <path d="M780.9 678H792.3V731.3A5.7 5.7 0 0 1 780.9 731.3Z"/>
 </g>
 <g fill="#F7F7F7">
  <rect x="721.3" y="676.3" width="14" height="2.2"/><rect x="740.9" y="676.3" width="14" height="2.2"/><rect x="760" y="676.3" width="14" height="2.2"/><rect x="779.6" y="676.3" width="14" height="2.2"/>
 </g>
 <path d="M724.85 683H731.75V731A3.45 3.45 0 0 1 724.85 731Z" fill="#8BC43F"/>
 <path d="M744.45 697H751.35V731A3.45 3.45 0 0 1 744.45 731Z" fill="#6A87C5"/>
 <path d="M763.55 703H770.45V731A3.45 3.45 0 0 1 763.55 731Z" fill="#D46DB5"/>
 <path d="M783.15 686.8H790.05V731A3.45 3.45 0 0 1 783.15 731Z" fill="#E08F5A"/>
 <g fill="#C8642A">
  <rect x="712" y="712.8" width="91.8" height="3"/>
  <rect x="716" y="712.8" width="3.3" height="31"/>
  <rect x="796.2" y="712.8" width="3.3" height="31"/>
  <rect x="712" y="741.2" width="91.8" height="3"/>
 </g>
 <!-- blue flask right -->
 <g fill="#35C3F0">
  <rect x="863.2" y="601" width="28.8" height="5.2"/>
  <rect x="865.8" y="606" width="23.7" height="56"/>
  <circle cx="877.5" cy="692.5" r="37.5"/>
 </g>
 <g fill="#D0EFFB"><circle cx="869.7" cy="674.9" r="5"/><circle cx="882.6" cy="678.8" r="3.5"/><circle cx="871.8" cy="684.6" r="2"/><circle cx="859.5" cy="687.9" r="4.3"/><circle cx="891.9" cy="690" r="7"/><circle cx="874.4" cy="695.4" r="5.4"/><circle cx="887" cy="703.6" r="3"/><circle cx="866" cy="710.5" r="9"/><circle cx="882" cy="714.9" r="5"/></g>
 <!-- microscope -->
 <path d="M1169.44 476.17A106.5 95.5 0 1 1 1056.72 628.89" fill="none" stroke="#808080" stroke-width="22"/>
 <path d="M1116 684.2Q1142.8 689 1169.6 684.2L1214 734Q1225 748.3 1207 748.3H1075Q1057 748.3 1068 734Z" fill="#808080"/>
 <rect x="988.2" y="618" width="168.2" height="17" rx="8.5" fill="#84DDF8"/>
 <rect x="1012" y="603.5" width="121" height="9.5" rx="4.75" fill="#E6E6E6"/>
 <g transform="translate(1130.5 471) rotate(16.8)" fill="#84DDF8">
  <rect x="-25" y="-59" width="50" height="122" rx="11"/>
  <rect x="-9.5" y="-80" width="23" height="30" rx="5"/>
 </g>
 <circle cx="1157" cy="473.5" r="21" fill="#84DDF8"/>
 <circle cx="1156.7" cy="473.4" r="9.5" fill="#2B2F33"/>
</symbol>
</defs>
</svg>
<svg style="left:302px;top:236px" width="961" height="540"><use href="#s1" width="961" height="540"/></svg>
<div class="a" style="left:302px;top:776px;width:961px;height:1px;background:rgba(0,0,0,0.08)"></div>
<svg style="left:0;top:0" width="1363" height="926">
 <rect x="423.5" y="519.5" width="721" height="131.5" fill="none" stroke="#E8E8E8" stroke-width="1" stroke-dasharray="2 1.5"/>
</svg>
<div class="t" style="left:674px;top:523.5px;font-size:24px;color:#111">单击此处添加副标题</div>
<!-- NOTES separator -->
<div class="a" style="left:222px;top:786px;width:1140px;height:1px;background:#C6C6C6"></div>
<div class="t" style="left:235px;top:796px;font-size:18px;line-height:22px;color:#404040;width:1120px;letter-spacing:0.36px">化学反应是指分子破裂成原子，原子重新排列组合生成新分子的过程。在反应中常伴有发光、发热、变色、生成沉淀物等，判断一个反<br>应是否为化学反应的依据是反应是否生成新的分子。</div>
<!-- STATUS BAR -->
<div class="a" style="left:0;top:898px;width:1363px;height:1px;background:#D0D0D0"></div>
<div class="a" style="left:0;top:899px;width:1363px;height:27px;background:#F3F3F3"></div>
<div class="a" style="left:897px;top:899px;width:50px;height:26px;background:#DCDCDC"></div>
<div class="t" style="left:16.5px;top:905px;font-size:15px;color:#262626">幻灯片 第 1 张，共 21 张</div>
<div class="t" style="left:223px;top:905px;font-size:15px;color:#262626">简体中文(中国大陆)</div>
<div class="t" style="left:396px;top:905px;font-size:15px;color:#262626;font-weight:bold">辅助功能: 调查</div>
<div class="t" style="left:766px;top:905px;font-size:15px;color:#262626">备注</div>
<div class="t" style="left:842px;top:905px;font-size:15px;color:#262626">批注</div>
<div class="t" style="left:1277px;top:904.5px;font-size:15px;color:#262626">60%</div>
<svg style="left:0;top:0" width="1363" height="926" viewBox="0 0 1363 926">
 <g fill="none" stroke="#404040" stroke-width="1.3">
  <!-- accessibility -->
  <circle cx="383.2" cy="905.2" r="1.9" stroke-width="1.2"/>
  <path d="M376.2 907.5C378.5 909.5 381 910 383 909.8C385.5 909.5 388 908.5 389.8 906.8M383 909.8C382.5 913 381 916 378 918.5M383.5 913.5L386 917" stroke-width="1.2"/>
  <path d="M385.5 914L392.5 920.5M392 913.5L384 920.5" stroke-width="1.1"/>
  <!-- notes -->
  <path d="M750 907.5L754.5 903L759 907.5M745.5 911.5H764.5M745.5 915H764.5M745.5 918.5H764.5"/>
  <!-- comments -->
  <path d="M823 904.5H840V914.5H829.5L825 918.5V914.5H823Z" stroke-linejoin="round"/>
  <!-- normal -->
  <rect x="913.5" y="904.5" width="16.5" height="13.5"/>
  <path d="M917 907.5H927V914.5H917ZM913.5 918H930" stroke-width="1.2"/>
  <!-- sorter -->
  <rect x="963.5" y="904.5" width="6.5" height="5.5"/><rect x="973.5" y="904.5" width="6.5" height="5.5"/>
  <rect x="963.5" y="913.5" width="6.5" height="5.5"/><rect x="973.5" y="913.5" width="6.5" height="5.5"/>
  <!-- reading -->
  <path d="M1013 905V918H1029V905H1013ZM1021 905V918M1015.5 908H1019M1015.5 911H1019M1015.5 914H1019M1023 908H1026.5M1023 911H1026.5M1023 914H1026.5" stroke-width="1.2"/>
  <!-- slideshow -->
  <path d="M1063.5 904.5H1079.5M1065 904.5V912.5H1078V904.5M1071.5 912.5V918.5M1068 918.5H1075"/>
  <!-- zoom -->
  <path d="M1105 911.5H1113.5M1251 911.5H1260M1255.5 907V916"/>
  <path d="M1121 911.5H1245" stroke="#8A8A8A" stroke-width="1"/>
  <path d="M1181.5 908V915" stroke="#8A8A8A" stroke-width="1"/>
  <!-- fit -->
  <rect x="1328.8" y="907.8" width="7.6" height="7.6" stroke-width="1.6"/>
  <path d="M1330.5 905L1332.6 902.8L1334.7 905M1330.5 918.2L1332.6 920.4L1334.7 918.2M1326 909.5L1323.8 911.6L1326 913.7M1339.2 909.5L1341.4 911.6L1339.2 913.7" stroke-width="1.2"/>
 </g>
 <rect x="1153.8" y="904" width="6" height="15" fill="#404040"/>
</svg>
<!-- window border -->
<div class="a" style="left:0;top:61px;width:1px;height:865px;background:#C43E1C"></div>
<div class="a" style="left:1362px;top:61px;width:1px;height:865px;background:#C43E1C"></div>
<div class="a" style="left:0;top:924px;width:1363px;height:2px;background:#C43E1C"></div>
</body></html>
